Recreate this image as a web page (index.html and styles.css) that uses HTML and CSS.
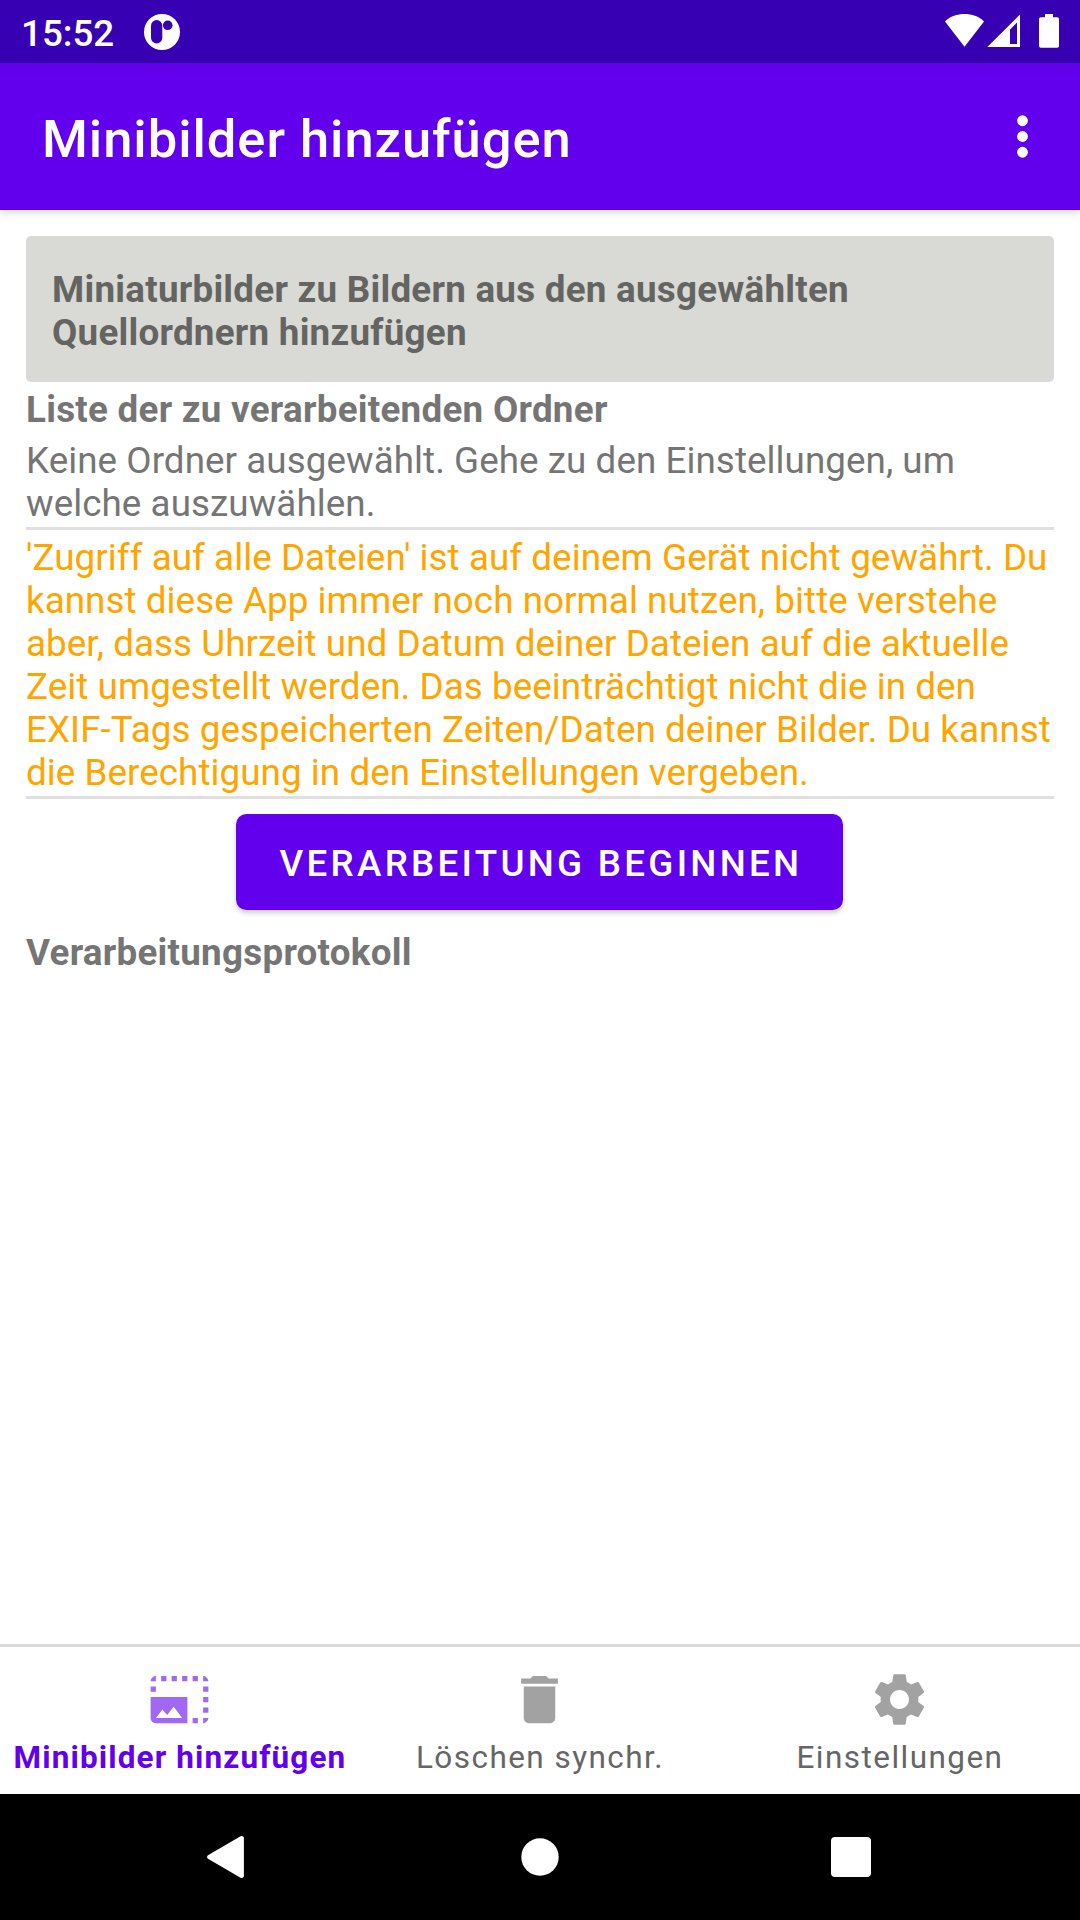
FILE: index.html
```html
<!DOCTYPE html>
<html lang="de">
<head>
<meta charset="utf-8">
<title>Minibilder hinzufügen</title>
<link rel="stylesheet" href="styles.css">
</head>
<body>
<div class="screen">
  <div class="status-bar">
    <div class="status-left">
      <span class="clock">15:52</span>
      <svg class="app-badge" viewBox="0 0 36 36">
        <circle cx="18" cy="18" r="18" fill="#fff"/>
        <rect x="7" y="6" width="11.3" height="23.4" rx="5.65" fill="#3700b3"/>
        <circle cx="23.7" cy="11.3" r="4.8" fill="#3700b3"/>
      </svg>
    </div>
    <svg class="status-icons" viewBox="0 0 114 36">
      <path d="M0 9.500C5.500 4 12 2 19.500 2S33.500 4 39 9.500L19.500 34.700Z"/>
      <path fill-rule="evenodd" d="M42.300 35L75 2.500V35ZM65 17.500V32H72V10.500Z"/>
      <path d="M100 2h8v3.300h4.200a1.800 1.800 0 0 1 1.800 1.800V34a1.800 1.800 0 0 1-1.800 1.800H95.800A1.800 1.800 0 0 1 94 34V7.100a1.800 1.800 0 0 1 1.800-1.800H100Z"/>
    </svg>
  </div>
  <header class="app-bar">
    <h1 class="title">Minibilder hinzufügen</h1>
    <svg class="more" viewBox="0 0 24 24"><circle cx="12" cy="6" r="2.050"/><circle cx="12" cy="12" r="2.050"/><circle cx="12" cy="18" r="2.050"/></svg>
  </header>
  <main class="content">
    <div class="banner">Miniaturbilder zu Bildern aus den ausgewählten<br>Quellordnern hinzufügen</div>
    <h2 class="heading list-heading">Liste der zu verarbeitenden Ordner</h2>
    <p class="text folders">Keine Ordner ausgewählt. Gehe zu den Einstellungen, um<br>welche auszuwählen.</p>
    <p class="text warning">'Zugriff auf alle Dateien' ist auf deinem Gerät nicht gewährt. Du<br>kannst diese App immer noch normal nutzen, bitte verstehe<br>aber, dass Uhrzeit und Datum deiner Dateien auf die aktuelle<br>Zeit umgestellt werden. Das beeinträchtigt nicht die in den<br>EXIF-Tags gespeicherten Zeiten/Daten deiner Bilder. Du kannst<br>die Berechtigung in den Einstellungen vergeben.</p>
    <button class="start">VERARBEITUNG BEGINNEN</button>
    <h2 class="heading log-heading">Verarbeitungsprotokoll</h2>
  </main>
  <nav class="tabs">
    <a class="tab active">
      <svg class="tab-icon" viewBox="0 0 24 24"><path d="M21 15h2v2h-2v-2zm0-4h2v2h-2v-2zm2 8h-2v2c1 0 2-1 2-2zM13 3h2v2h-2V3zm8 4h2v2h-2V7zm0-4v2h2c0-1-1-2-2-2zM1 7h2v2H1V7zm16-4h2v2h-2V3zm0 16h2v2h-2v-2zM3 3C2 3 1 4 1 5h2V3zm6 0h2v2H9V3zM5 3h2v2H5V3zm-4 8v8c0 1.100.9 2 2 2h12V11H1zm2 8l2.500-3.210 1.790 2.150 2.500-3.220L13 19H3z"/></svg>
      <span class="label">Minibilder hinzufügen</span>
    </a>
    <a class="tab">
      <svg class="tab-icon" viewBox="0 0 24 24"><path d="M6 19c0 1.100.9 2 2 2h8c1.100 0 2-.9 2-2V7H6v12zM19 4h-3.500l-1-1h-5l-1 1H5v2h14V4z"/></svg>
      <span class="label">Löschen synchr.</span>
    </a>
    <a class="tab">
      <svg class="tab-icon" viewBox="0 0 24 24"><path d="M19.140 12.940c.04-.3.06-.61.06-.94 0-.32-.02-.64-.07-.94l2.030-1.580c.18-.14.23-.41.12-.61l-1.920-3.320c-.12-.22-.37-.29-.59-.22l-2.390.96c-.5-.38-1.030-.7-1.620-.94l-.36-2.540c-.04-.24-.24-.41-.48-.41h-3.840c-.24 0-.43.17-.47.41l-.36 2.540c-.59.24-1.130.57-1.620.94l-2.390-.96c-.22-.08-.47 0-.59.22L2.740 8.870c-.12.21-.08.47.12.61l2.030 1.580c-.05.3-.09.63-.09.94s.02.64.07.94l-2.030 1.580c-.18.14-.23.41-.12.61l1.920 3.320c.12.22.37.29.59.22l2.390-.96c.5.38 1.030.7 1.620.94l.36 2.540c.05.24.24.41.48.41h3.840c.24 0 .44-.17.47-.41l.36-2.540c.59-.24 1.130-.56 1.620-.94l2.390.96c.22.08.47 0 .59-.22l1.920-3.320c.12-.22.07-.47-.12-.61l-2.010-1.580zM12 15.600c-1.980 0-3.600-1.620-3.600-3.600s1.620-3.600 3.600-3.600 3.600 1.620 3.600 3.600-1.620 3.600-3.600 3.600z"/></svg>
      <span class="label">Einstellungen</span>
    </a>
  </nav>
  <div class="system-nav">
    <svg class="sys-icon" viewBox="0 0 48 48"><path d="M3 22.300L35.500 3.200a2.300 2.300 0 0 1 3.400 2V42.800a2.300 2.300 0 0 1-3.400 2L3 25.700a2 2 0 0 1 0-3.400Z"/></svg>
    <svg class="sys-icon" viewBox="0 0 48 48"><circle cx="24" cy="24" r="18.700"/></svg>
    <svg class="sys-icon" viewBox="0 0 48 48"><rect x="4" y="4" width="40" height="40" rx="4"/></svg>
  </div>
</div>
</body>
</html>
```
FILE: styles.css
```css
* { box-sizing: border-box; }

body {
  margin: 0;
  background: #fff;
  font-family: Roboto, sans-serif;
}

.screen {
  width: 1080px;
  height: 1920px;
  display: flex;
  flex-direction: column;
  overflow: hidden;
}

.status-bar {
  flex: none;
  height: 63px;
  padding: 0 21px;
  display: flex;
  justify-content: space-between;
  align-items: center;
  background: #3700b3;
  color: #fff;
}

.status-left { display: flex; align-items: center; gap: 30px; }
.clock { width: 93px; font-size: 36.75px; font-weight: 500; line-height: 43px; padding-top: 4px; }
.app-badge { width: 36px; height: 36px; }
.status-icons { width: 114px; height: 36px; fill: #fff; margin-bottom: 3px; }

.app-bar {
  flex: none;
  height: 147px;
  padding: 0 26px 0 42px;
  display: flex;
  justify-content: space-between;
  align-items: center;
  background: #6200ee;
  color: #fff;
  box-shadow: 0 2px 8px rgba(0, 0, 0, .18);
}

.title { margin: 0; font-size: 52.5px; font-weight: 500; line-height: 62px; letter-spacing: .95px; padding-top: 4px; }
.more { width: 63px; height: 63px; fill: #fff; }

.content {
  flex: 1;
  padding: 26px 26px 0;
  display: flex;
  flex-direction: column;
  font-size: 36.75px;
  line-height: 43px;
  letter-spacing: .07px;
  color: #757575;
  white-space: nowrap;
}

.banner {
  height: 146px;
  padding: 32px 26px 28px;
  border-radius: 5px;
  background: #d9dad5;
  color: #646462;
  font-weight: 700;
  letter-spacing: .26px;
}

.heading { margin: 0; font-size: inherit; font-weight: 700; letter-spacing: .28px; }
.list-heading { margin-top: 6px; }
.text { margin: 0; border-bottom: 3px solid #e0e0e0; }
.folders { margin-top: 8px; padding-bottom: 2px; }
.warning { padding: 6px 0 2px; color: #ffa500; }

.start {
  align-self: center;
  width: 607px;
  height: 96px;
  margin: 15px 1px 0 0;
  padding: 2px 0 0 3px;
  border: 0;
  border-radius: 10.5px;
  background: #6200ee;
  color: #fff;
  font: 500 36.75px/43px Roboto, sans-serif;
  letter-spacing: 3.28px;
  box-shadow: 0 3px 5px rgba(0, 0, 0, .2);
}

.log-heading { margin-top: 21px; }

.tabs {
  flex: none;
  height: 150px;
  border-top: 3px solid #dadada;
  display: grid;
  grid-template-columns: repeat(3, 1fr);
}

.tab {
  display: flex;
  flex-direction: column;
  align-items: center;
  padding-top: 21px;
  color: #666;
}

.tab-icon { width: 63px; height: 63px; margin-right: 1px; fill: #a2a2a2; }
.label { margin-top: 8px; font-size: 31.5px; line-height: 37px; letter-spacing: 1.45px; white-space: nowrap; }
.active { color: #6200ee; }
.active .tab-icon { fill: #a168f6; }
.active .label { font-weight: 700; letter-spacing: 1.12px; }

.system-nav {
  flex: none;
  height: 126px;
  display: flex;
  justify-content: center;
  align-items: center;
  gap: 263px;
  background: #000;
}

.sys-icon { width: 48px; height: 48px; fill: #fff; }
```
